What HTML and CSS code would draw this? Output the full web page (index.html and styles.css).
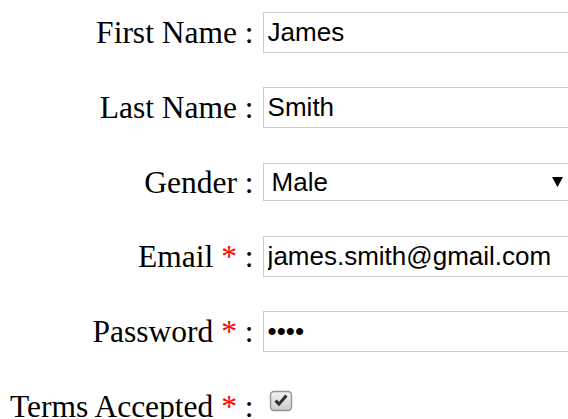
FILE: index.html
```html
<!DOCTYPE html>
<html lang="en">
<head>
<meta charset="utf-8">
<title>Registration</title>
<link rel="stylesheet" href="styles.css">
</head>
<body>
<form class="form">
  <label class="label" for="first">First Name :</label>
  <div class="cell"><input class="field" id="first" type="text" value="James"></div>

  <label class="label" for="last">Last Name :</label>
  <div class="cell"><input class="field" id="last" type="text" value="Smith"></div>

  <label class="label" for="gender">Gender :</label>
  <div class="cell">
    <div class="select-wrap">
      <select class="field select" id="gender">
        <option selected>Male</option>
        <option>Female</option>
      </select>
      <svg class="arrow" width="11" height="10" viewBox="0 0 11 10" aria-hidden="true"><path d="M0 0H11L5.5 10Z" fill="#000"/></svg>
    </div>
  </div>

  <label class="label" for="email">Email <span class="req">*</span> :</label>
  <div class="cell"><input class="field" id="email" type="text" value="james.smith@gmail.com"></div>

  <label class="label" for="pass">Password <span class="req">*</span> :</label>
  <div class="cell"><input class="field" id="pass" type="password" value="abcd"></div>

  <label class="label" for="terms">Terms Accepted <span class="req">*</span> :</label>
  <div class="cell">
    <span class="checkbox" id="terms" role="checkbox" aria-checked="true">
      <svg width="25" height="23" viewBox="0 0 25 23" aria-hidden="true">
        <defs>
          <linearGradient id="boxfill" x1="0" y1="0" x2="0" y2="1">
            <stop offset="0" stop-color="#f2f2f2"/>
            <stop offset="1" stop-color="#cccccc"/>
          </linearGradient>
        </defs>
        <rect x="1.5" y="1.5" width="21" height="19" rx="3.5" fill="url(#boxfill)" stroke="#949494" stroke-width="1.4"/>
        <path d="M5.4 11.6L10 16.2L18.6 6.6L16.2 4.6L9.9 12L7.8 9.4Z" fill="#2e2e2e"/>
      </svg>
    </span>
  </div>
</form>
</body>
</html>
```
FILE: styles.css
```css
html, body {
  overflow: hidden;
}

body {
  margin: 0;
  background: #fff;
  color: #000;
  font-family: "Liberation Serif", "Times New Roman", serif;
}

.form {
  display: grid;
  grid-template-columns: max-content 320px;
  grid-auto-rows: 41px;
  row-gap: 33.75px;
  column-gap: 9px;
  align-items: center;
  padding: 12px 0 0 10px;
}

.label {
  font-size: 31.5px;
  text-align: right;
  white-space: nowrap;
  line-height: 41px;
}

.req {
  color: #f00;
}

.cell {
  display: flex;
  align-items: center;
  height: 41px;
}

.field {
  box-sizing: border-box;
  width: 312px;
  height: 41px;
  margin: 0;
  padding: 0 4px;
  border: 1px solid #cccccc;
  border-radius: 0;
  background: #fff;
  color: #000;
  font-family: "Liberation Sans", Arial, sans-serif;
  font-size: 26px;
  outline: none;
}

.select-wrap {
  position: relative;
  display: flex;
  align-items: center;
}

.select {
  height: 38px;
  padding: 0 8px;
  appearance: none;
  -webkit-appearance: none;
}

.arrow {
  position: absolute;
  right: 12px;
  top: 14px;
}

.checkbox {
  display: inline-block;
  width: 25px;
  height: 23px;
  margin: 0 0 9px 6px;
}

.checkbox svg {
  display: block;
}
```
